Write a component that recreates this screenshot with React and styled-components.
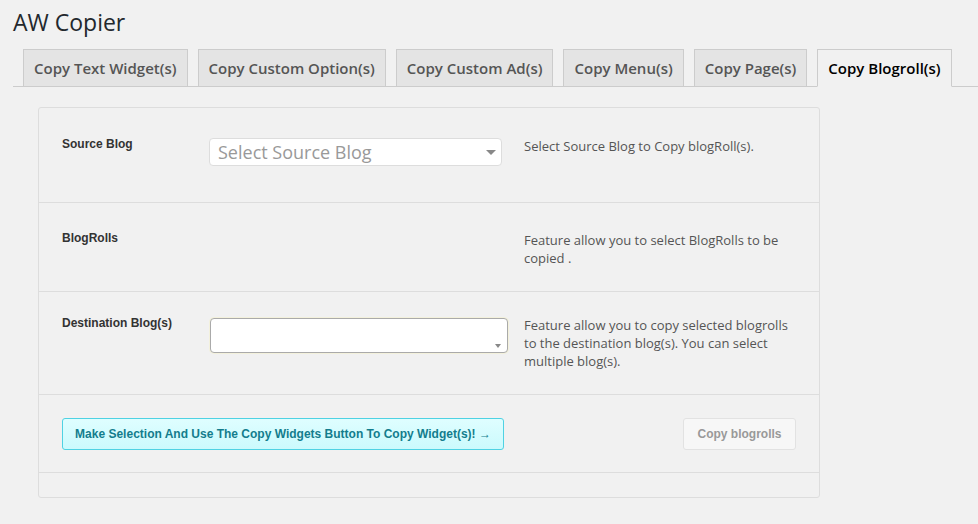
import React from "react";
import styled, { createGlobalStyle } from "styled-components";

const GlobalStyle = createGlobalStyle`
  html, body {
    margin: 0;
    padding: 0;
    background: #f1f1f1;
  }
  body {
    font-family: "Open Sans", "Liberation Sans", sans-serif;
    color: #444;
  }
`;

const tabs = [
  "Copy Text Widget(s)",
  "Copy Custom Option(s)",
  "Copy Custom Ad(s)",
  "Copy Menu(s)",
  "Copy Page(s)",
  "Copy Blogroll(s)",
];

const App = () => (
  <>
    <GlobalStyle />
    <Wrap>
      <Title>AW Copier</Title>
      <TabBar>
        {tabs.map((t, i) => (
          <Tab key={t} active={i === tabs.length - 1}>
            {t}
          </Tab>
        ))}
      </TabBar>
      <Panel>
        <Row height={95} pad={30}>
          <Label>Source Blog</Label>
          <Field>
            <SelectBox>
              <Placeholder>Select Source Blog</Placeholder>
              <Arrow />
            </SelectBox>
          </Field>
          <Desc>Select Source Blog to Copy blogRoll(s).</Desc>
        </Row>
        <Row height={89} pad={29}>
          <Label>BlogRolls</Label>
          <Field />
          <Desc>Feature allow you to select BlogRolls to be copied .</Desc>
        </Row>
        <Row height={103} pad={25}>
          <Label>Destination Blog(s)</Label>
          <Field>
            <MultiBox>
              <SmallArrow />
            </MultiBox>
          </Field>
          <Desc>
            Feature allow you to copy selected blogrolls to the destination
            blog(s). You can select multiple blog(s).
          </Desc>
        </Row>
        <ActionRow>
          <InfoButton>
            Make Selection And Use The Copy Widgets Button To Copy Widget(s)! →
          </InfoButton>
          <CopyButton disabled>Copy blogrolls</CopyButton>
        </ActionRow>
        <EmptyRow />
      </Panel>
    </Wrap>
  </>
);

export default App;

const Wrap = styled.div`
  padding: 6px 0 26px 13px;
`;

const Title = styled.h1`
  margin: 0 0 11px 0;
  font-family: "Open Sans", sans-serif;
  font-weight: 400;
  font-size: 23px;
  line-height: 32px;
  color: #23282d;
`;

const TabBar = styled.div`
  display: flex;
  gap: 10px;
  padding-left: 10px;
  border-bottom: 1px solid #ccc;
  height: 37px;
`;

const Tab = styled.div`
  box-sizing: border-box;
  height: 38px;
  padding: 0 10px;
  display: flex;
  align-items: center;
  border: 1px solid #ccc;
  border-bottom-color: ${(p) => (p.active ? "#f1f1f1" : "#ccc")};
  background: ${(p) => (p.active ? "#f1f1f1" : "#e4e4e4")};
  color: ${(p) => (p.active ? "#000" : "#555")};
  font-family: "Open Sans", sans-serif;
  font-weight: 600;
  font-size: 15px;
  white-space: nowrap;
`;

const Panel = styled.div`
  margin: 20px 0 0 25px;
  width: 782px;
  box-sizing: border-box;
  border: 1px solid #ddd;
  border-radius: 3px;
  background: #f1f1f1;
`;

const Row = styled.div`
  box-sizing: border-box;
  height: ${(p) => p.height}px;
  padding: ${(p) => p.pad}px 24px 0 23px;
  display: grid;
  grid-template-columns: 147px 315px 1fr;
  align-items: start;
  border-bottom: 1px solid #ddd;
`;

const Label = styled.div`
  font-family: "Liberation Sans", Arial, sans-serif;
  font-weight: 700;
  font-size: 12px;
  line-height: 12px;
  color: #333;
`;

const Field = styled.div``;

const SelectBox = styled.div`
  box-sizing: border-box;
  width: 293px;
  height: 28px;
  background: #fff;
  border: 1px solid #ddd;
  border-radius: 4px;
  display: flex;
  align-items: center;
  justify-content: space-between;
  padding: 0 5px 0 8px;
`;

const Placeholder = styled.span`
  font-family: "Open Sans", sans-serif;
  font-size: 18px;
  color: #999;
  margin-top: -1px;
`;

const Arrow = styled.span`
  width: 0;
  height: 0;
  border-left: 5px solid transparent;
  border-right: 5px solid transparent;
  border-top: 5px solid #888;
`;

const MultiBox = styled.div`
  box-sizing: border-box;
  width: 298px;
  height: 35px;
  margin: 1px 0 0 1px;
  background: #fff;
  border: 1px solid #aaa;
  border-radius: 4px;
  box-shadow: 0 0 0 1px #f3f1dc;
  position: relative;
`;

const SmallArrow = styled.span`
  position: absolute;
  right: 6px;
  bottom: 4px;
  width: 0;
  height: 0;
  border-left: 3px solid transparent;
  border-right: 3px solid transparent;
  border-top: 4px solid #888;
`;

const Desc = styled.div`
  max-width: 265px;
  font-family: "Open Sans", sans-serif;
  font-size: 13px;
  line-height: 18px;
  color: #555;
  margin-top: -1px;
`;

const ActionRow = styled.div`
  box-sizing: border-box;
  height: 78px;
  padding: 23px 23px 0 23px;
  display: flex;
  justify-content: space-between;
  align-items: flex-start;
  border-bottom: 1px solid #ddd;
`;

const InfoButton = styled.div`
  box-sizing: border-box;
  width: 442px;
  height: 32px;
  display: flex;
  align-items: center;
  justify-content: center;
  background: linear-gradient(#dffeff, #cbfafd);
  border: 1px solid #4fd2e3;
  border-radius: 3px;
  font-family: "Liberation Sans", Arial, sans-serif;
  font-weight: 700;
  font-size: 12px;
  color: #137d8d;
`;

const CopyButton = styled.button`
  box-sizing: border-box;
  width: 113px;
  height: 32px;
  background: #f7f7f7;
  border: 1px solid #e2e2e2;
  border-radius: 3px;
  font-family: "Liberation Sans", Arial, sans-serif;
  font-weight: 700;
  font-size: 12px;
  color: #999;
  padding: 0;
`;

const EmptyRow = styled.div`
  height: 24px;
`;
